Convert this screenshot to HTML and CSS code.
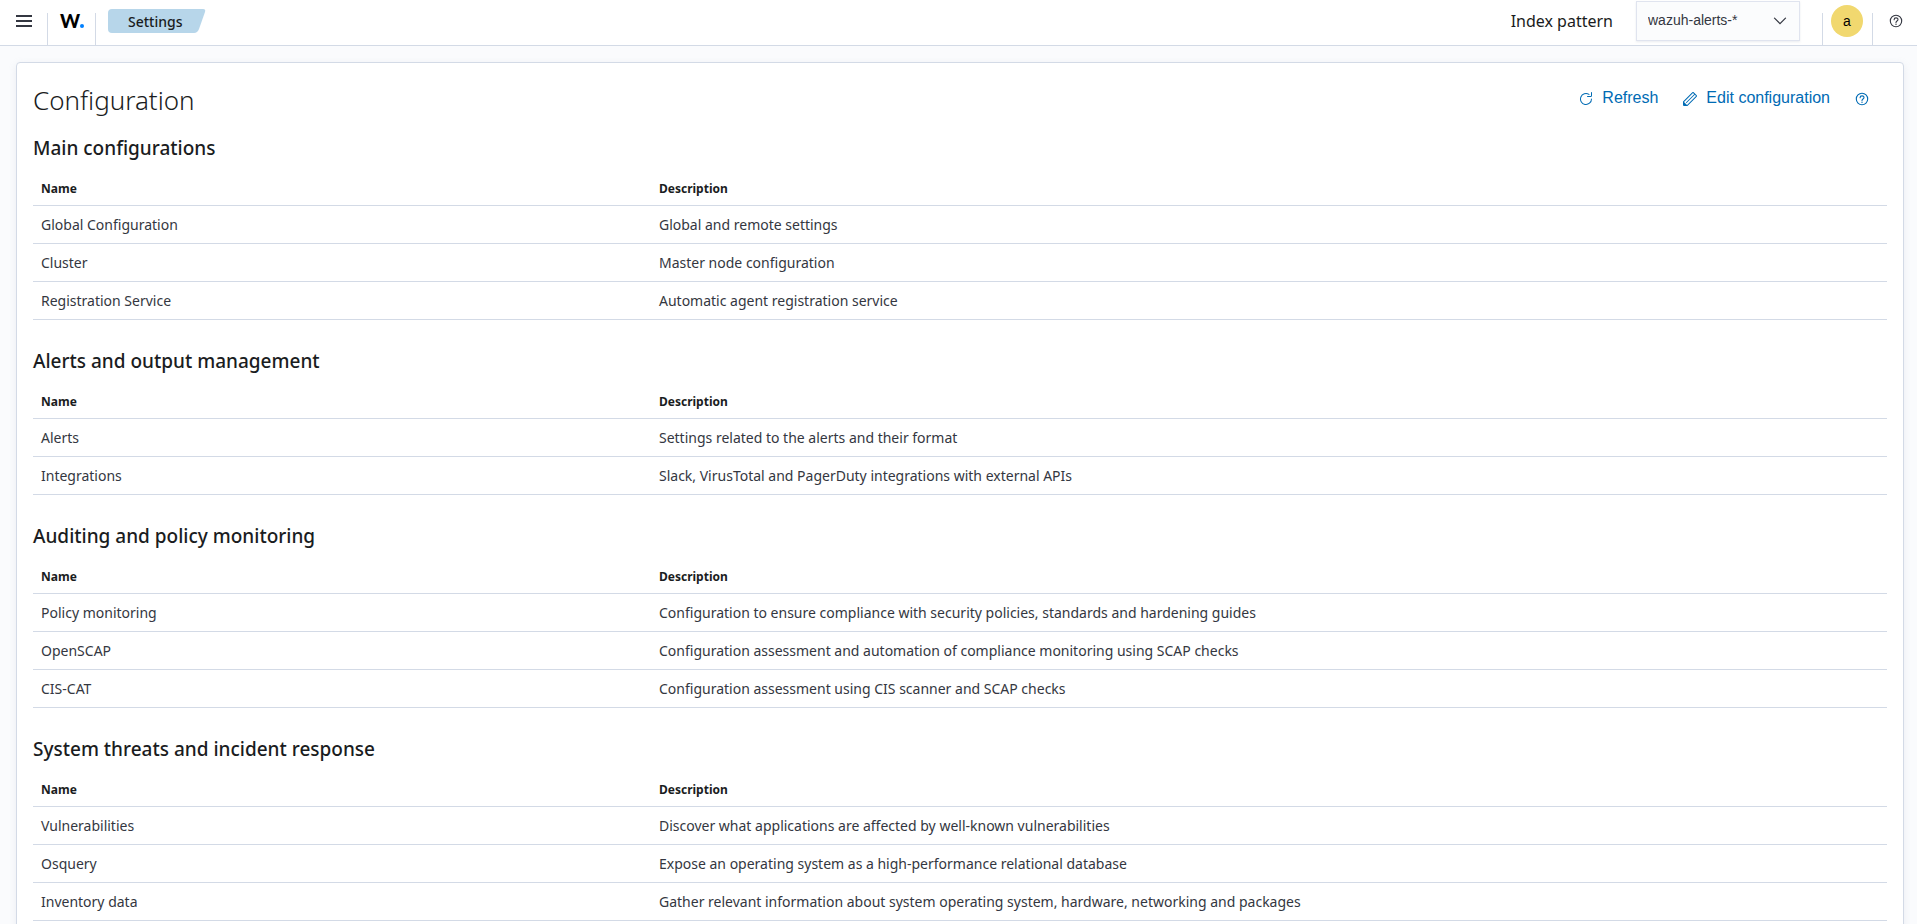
FILE: index.html
```html
<!DOCTYPE html>
<html lang="en">
<head>
<meta charset="utf-8">
<title>Wazuh - Settings</title>
<link rel="stylesheet" href="styles.css">
</head>
<body>
<header class="topbar">
  <button class="icon-button menu" aria-label="Menu">
    <svg width="16" height="16" viewBox="0 0 16 16"><path d="M0 2h16v2H0zM0 7h16v2H0zM0 12h16v2H0z" fill="currentColor"/></svg>
  </button>
  <a class="logo divided" href="#" aria-label="Wazuh home"><span>W</span><i class="logo-dot"></i></a>
  <nav class="crumbs divided" aria-label="Breadcrumb">
    <svg class="crumb-shape" viewBox="0 0 98 24" preserveAspectRatio="none"><path d="M4 0H95q3 0 2 3L91 20q-1.500 4-5 4H4q-4 0-4-4V4q0-4 4-4z" fill="#b7d6ea"/></svg>
    <span class="crumb">Settings</span>
  </nav>
  <label class="pattern-label" for="pattern">Index pattern</label>
  <div class="select-box">
    <select id="pattern"><option>wazuh-alerts-*</option></select>
    <svg class="chevron" width="16" height="16" viewBox="0 0 16 16"><path d="M2.500 5.200 8 10.700l5.500-5.500" fill="none" stroke="#343741" stroke-width="1.200" stroke-linecap="round"/></svg>
  </div>
  <div class="user divided"><button class="avatar" aria-label="Account">a</button></div>
  <div class="help divided">
    <button class="icon-button" aria-label="Help">
      <svg width="16" height="16" viewBox="0 0 16 16" fill="none" stroke="currentColor"><circle cx="8" cy="8" r="5.700" stroke-width="1.100"/><path d="M6.100 6.700c0-2.500 3.900-2.400 3.900-.2C10 8 8 7.900 8 9.400" stroke-width="1.100" stroke-linecap="round"/><circle cx="8" cy="11.200" r=".7" fill="currentColor" stroke="none"/></svg>
    </button>
  </div>
</header>
<main class="page">
  <div class="panel">
    <div class="panel-head">
      <h1>Configuration</h1>
      <div class="actions">
        <button class="action">
          <svg width="16" height="16" viewBox="0 0 16 16" fill="currentColor"><path d="M11.228 2.942a.5.5 0 1 1-.538.842A5 5 0 1 0 13 8a.5.5 0 1 1 1 0 6 6 0 1 1-2.772-5.058zM14 1.500v3A1.500 1.500 0 0 1 12.500 6h-3a.5.5 0 0 1 0-1h3a.5.5 0 0 0 .5-.5v-3a.5.5 0 1 1 1 0z"/></svg>
          <span>Refresh</span>
        </button>
        <button class="action">
          <svg width="16" height="16" viewBox="0 0 16 16" fill="currentColor"><path fill-rule="evenodd" d="M12.148 3.148 11 2l-9 9v3h3l9-9-1.144-1.144-8.002 7.998a.502.502 0 0 1-.708 0 .502.502 0 0 1 0-.708l8.002-7.998zM11 1c.256 0 .512.098.707.293l3 3a.999.999 0 0 1 0 1.414l-9 9A.997.997 0 0 1 5 15H2a1 1 0 0 1-1-1v-3c0-.265.105-.520.293-.707l9-9A.997.997 0 0 1 11 1z"/><path d="M5 14H2v-3z"/></svg>
          <span>Edit configuration</span>
        </button>
        <button class="icon-button action-help" aria-label="Configuration help">
          <svg width="16" height="16" viewBox="0 0 16 16" fill="none" stroke="currentColor"><circle cx="8" cy="8" r="5.700" stroke-width="1.100"/><path d="M6.100 6.700c0-2.500 3.900-2.400 3.900-.2C10 8 8 7.900 8 9.400" stroke-width="1.100" stroke-linecap="round"/><circle cx="8" cy="11.200" r=".7" fill="currentColor" stroke="none"/></svg>
        </button>
      </div>
    </div>

    <section class="group">
      <h2>Main configurations</h2>
      <table>
        <thead><tr><th scope="col">Name</th><th scope="col">Description</th></tr></thead>
        <tbody>
          <tr><td>Global Configuration</td><td>Global and remote settings</td></tr>
          <tr><td>Cluster</td><td>Master node configuration</td></tr>
          <tr><td>Registration Service</td><td>Automatic agent registration service</td></tr>
        </tbody>
      </table>
    </section>

    <section class="group">
      <h2>Alerts and output management</h2>
      <table>
        <thead><tr><th scope="col">Name</th><th scope="col">Description</th></tr></thead>
        <tbody>
          <tr><td>Alerts</td><td>Settings related to the alerts and their format</td></tr>
          <tr><td>Integrations</td><td>Slack, VirusTotal and PagerDuty integrations with external APIs</td></tr>
        </tbody>
      </table>
    </section>

    <section class="group">
      <h2>Auditing and policy monitoring</h2>
      <table>
        <thead><tr><th scope="col">Name</th><th scope="col">Description</th></tr></thead>
        <tbody>
          <tr><td>Policy monitoring</td><td>Configuration to ensure compliance with security policies, standards and hardening guides</td></tr>
          <tr><td>OpenSCAP</td><td>Configuration assessment and automation of compliance monitoring using SCAP checks</td></tr>
          <tr><td>CIS-CAT</td><td>Configuration assessment using CIS scanner and SCAP checks</td></tr>
        </tbody>
      </table>
    </section>

    <section class="group">
      <h2>System threats and incident response</h2>
      <table>
        <thead><tr><th scope="col">Name</th><th scope="col">Description</th></tr></thead>
        <tbody>
          <tr><td>Vulnerabilities</td><td>Discover what applications are affected by well-known vulnerabilities</td></tr>
          <tr><td>Osquery</td><td>Expose an operating system as a high-performance relational database</td></tr>
          <tr><td>Inventory data</td><td>Gather relevant information about system operating system, hardware, networking and packages</td></tr>
        </tbody>
      </table>
    </section>
  </div>
</main>
</body>
</html>
```

FILE: styles.css
```css
* {
  box-sizing: border-box;
}

html {
  height: 100%;
}

body {
  margin: 0;
  height: 100%;
  overflow: hidden;
  background: #fafbfd;
  color: #343741;
  font-family: "Noto Sans", sans-serif;
  font-size: 14px;
}

button {
  border: 0;
  padding: 0;
  background: none;
  cursor: pointer;
}

.topbar {
  display: flex;
  align-items: flex-start;
  height: 46px;
  background: #fff;
  border-bottom: 1px solid #d3dae6;
}

.icon-button {
  display: flex;
  color: #343741;
}

.menu {
  padding: 13px 15px 0 16px;
}

.divided {
  height: 45px;
  background: linear-gradient(#d3dae6, #d3dae6) 0 13px / 1px 32px no-repeat;
}

.logo {
  display: flex;
  align-items: baseline;
  width: 48px;
  padding: 9px 0 0 13px;
  color: #000;
  font-family: Lato, sans-serif;
  font-size: 19px;
  font-weight: 900;
  line-height: 24px;
  text-decoration: none;
}

.logo-dot {
  width: 4px;
  height: 4px;
  border-radius: 50%;
  background: #0080ff;
}

.crumbs {
  display: grid;
  flex: 1;
  grid-template-columns: 98px;
  grid-template-rows: 24px;
  padding: 9px 0 0 13px;
}

.crumb-shape,
.crumb {
  grid-area: 1 / 1;
}

.crumb-shape {
  width: 98px;
  height: 24px;
}

.crumb {
  z-index: 1;
  padding-left: 20px;
  color: #1a1c21;
  font-weight: 500;
  line-height: 25px;
}

.pattern-label {
  padding-right: 23px;
  color: #1a1c21;
  font-size: 16px;
  line-height: 42px;
}

.select-box {
  display: grid;
  width: 164px;
  height: 40px;
  margin: 1px 22px 0 0;
  border: 1px solid #e0e4ef;
  background: #fbfcfd;
  box-shadow: 0 1px 2px #98a2b333;
}

.select-box select,
.chevron {
  grid-area: 1 / 1;
}

.select-box select {
  appearance: none;
  border: 0;
  padding: 0 40px 2px 11px;
  background: none;
  color: #343741;
  font-family: "Liberation Sans", sans-serif;
  font-size: 14px;
}

.chevron {
  place-self: center end;
  margin-right: 11px;
  pointer-events: none;
}

.user {
  width: 50px;
  padding: 5px 0 0 9px;
}

.avatar {
  width: 32px;
  height: 32px;
  border-radius: 50%;
  background: #f1d86f;
  color: #000;
  font-family: "Liberation Sans", sans-serif;
  font-size: 14px;
  font-weight: 500;
}

.help {
  padding: 13px 13px 0 16px;
}

.page {
  padding: 16px 13px 0 16px;
}

.panel {
  padding: 16px 16px 24px;
  border: 1px solid #d3dae6;
  border-radius: 4px;
  background: #fff;
  box-shadow: 0 2px 8px -1px #98a2b333;
}

.panel-head {
  display: flex;
  justify-content: space-between;
  height: 53px;
}

h1 {
  margin: 0;
  color: #1a1c21;
  font-size: 26px;
  font-weight: 300;
  line-height: 42px;
}

.actions {
  display: flex;
  align-items: flex-start;
  padding-right: 17px;
}

.action {
  display: flex;
  align-items: center;
  gap: 8px;
  margin-right: 24px;
  color: #006bb4;
  font-family: "Liberation Sans", sans-serif;
  font-size: 16px;
  line-height: 38px;
}

.action svg {
  margin-top: 2px;
}

.action-help {
  padding-top: 12px;
  color: #006bb4;
}

.group {
  margin-bottom: 24px;
}

h2 {
  margin: 0 0 8px;
  color: #1a1c21;
  font-size: 19px;
  font-weight: 500;
  line-height: 32px;
}

table {
  width: 100%;
  border-collapse: separate;
  border-spacing: 0;
  table-layout: fixed;
}

th,
td {
  padding: 8px;
  border-bottom: 1px solid #d3dae6;
  text-align: left;
}

th {
  padding-bottom: 7px;
  color: #1a1c21;
  font-size: 12px;
  font-weight: 700;
  line-height: 18px;
}

th:first-child {
  width: calc(100% / 3);
}

td {
  line-height: 21px;
}

.group {
  margin-bottom: 25px;
}
```
